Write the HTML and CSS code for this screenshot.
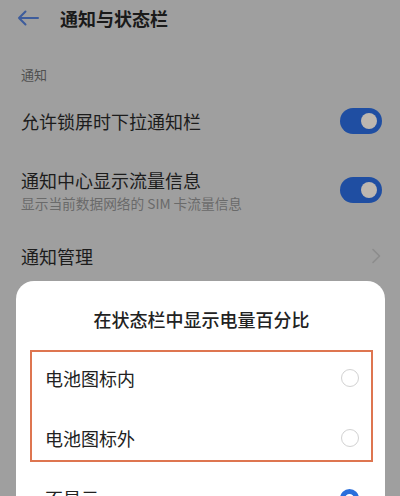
FILE: index.html
```html
<!DOCTYPE html>
<html lang="zh-CN">
<head>
    <meta charset="UTF-8">
    <meta name="viewport" content="width=device-width, initial-scale=1.0">
    <title>通知与状态栏</title>
    <link rel="stylesheet" href="styles.css">
</head>
<body>
    <div class="screen">
        <!-- 顶部标题栏 -->
        <div class="header">
            <svg class="back" width="22" height="16" viewBox="0 0 22 16">
                <path d="M21 8H2M8.5 1.5L2 8l6.5 6.5" fill="none" stroke="#3d5c9c" stroke-width="2" stroke-linecap="round" stroke-linejoin="round"/>
            </svg>
            <h1>通知与状态栏</h1>
        </div>

        <div class="section-label">通知</div>

        <div class="row row-first">
            <div class="row-text">
                <div class="row-title">允许锁屏时下拉通知栏</div>
            </div>
            <span class="switch on"></span>
        </div>

        <div class="row row-double">
            <div class="row-text">
                <div class="row-title">通知中心显示流量信息</div>
                <div class="row-sub">显示当前数据网络的 SIM 卡流量信息</div>
            </div>
            <span class="switch on"></span>
        </div>

        <div class="row row-single">
            <div class="row-text">
                <div class="row-title">通知管理</div>
            </div>
            <svg class="chevron" width="10" height="16" viewBox="0 0 10 16">
                <path d="M2 1.5L8.5 8 2 14.5" fill="none" stroke="#8c8c8c" stroke-width="1.6" stroke-linecap="round" stroke-linejoin="round"/>
            </svg>
        </div>

        <!-- 底部弹窗 -->
        <div class="sheet">
            <div class="sheet-title">在状态栏中显示电量百分比</div>
            <div class="highlight">
                <div class="option">
                    <span>电池图标内</span>
                    <span class="radio"></span>
                </div>
                <div class="option">
                    <span>电池图标外</span>
                    <span class="radio"></span>
                </div>
            </div>
            <div class="option option-plain">
                <span>不显示</span>
                <span class="radio checked"></span>
            </div>
        </div>
    </div>
</body>
</html>
```

FILE: styles.css
```css
/* 基础 */
body {
    margin: 0;
    font-family: "Noto Sans CJK SC", "Noto Sans", sans-serif;
    background: #9f9f9f;
    color: #1c1c1c;
}

.screen {
    position: relative;
    width: 400px;
    height: 496px;
    overflow: hidden;
    background: #9f9f9f;
}

/* 标题栏 */
.header {
    display: flex;
    align-items: center;
    height: 36px;
    padding-left: 17px;
}

.back {
    margin-right: 21px;
}

.header h1 {
    margin: 0;
    font-size: 18px;
    font-weight: 700;
    line-height: 24px;
    color: #1a1a1a;
}

.section-label {
    margin-top: 30px;
    padding-left: 21px;
    font-size: 13px;
    line-height: 18px;
    color: #505050;
}

/* 列表行 */
.row {
    display: flex;
    align-items: center;
    justify-content: space-between;
    padding: 0 18px 0 21px;
}

.row-first {
    margin-top: 8px;
    height: 58px;
}

.row-single {
    height: 60px;
}

.row-double {
    padding-top: 18px;
    padding-bottom: 14px;
}

.row-title {
    font-size: 18px;
    line-height: 24px;
}

.row-sub {
    margin-top: 2px;
    font-size: 13.7px;
    line-height: 18px;
    color: #6a6a6a;
}

.switch {
    position: relative;
    width: 42px;
    height: 26px;
    border-radius: 13px;
    background: #1f4ea2;
    flex-shrink: 0;
}

.switch.on::after {
    content: "";
    position: absolute;
    top: 5px;
    right: 5px;
    width: 16px;
    height: 16px;
    border-radius: 50%;
    background: #bdb7b0;
}

.chevron {
    margin-right: 1px;
}

/* 弹窗 */
.sheet {
    position: absolute;
    top: 281px;
    left: 16px;
    right: 15px;
    bottom: -40px;
    background: #fff;
    border-radius: 18px;
    padding: 25px 12px 0 14px;
    color: #222;
}

.sheet-title {
    text-align: center;
    font-size: 18px;
    font-weight: 500;
    line-height: 26px;
    margin-bottom: 18px;
}

.highlight {
    border: 2px solid #de7550;
    padding: 12px 0 8px;
    display: flex;
    flex-direction: column;
    gap: 32px;
}

.option {
    display: flex;
    align-items: center;
    justify-content: space-between;
    height: 28px;
    padding: 0 12px 0 13px;
    font-size: 18px;
}

.option-plain {
    margin-top: 22px;
    padding: 0 14px 0 15px;
}

.radio {
    width: 16px;
    height: 16px;
    border: 1.5px solid #d2d2d2;
    border-radius: 50%;
}

.radio.checked {
    border: 5px solid #2a6fdc;
    width: 9px;
    height: 9px;
}
```
